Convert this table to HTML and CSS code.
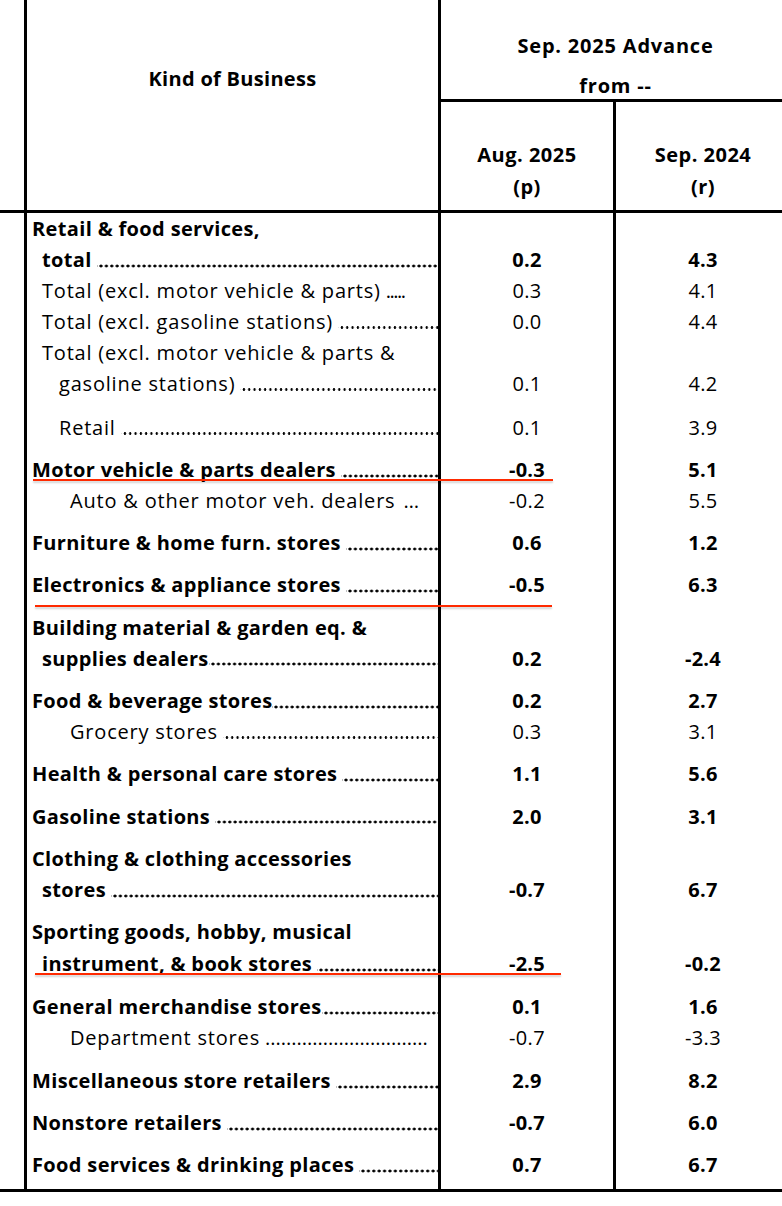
FILE: index.html
```html
<!DOCTYPE html>
<html lang="en">
<head>
<meta charset="utf-8">
<title>Advance Retail Sales</title>
<link rel="stylesheet" href="styles.css">
</head>
<body>
<div class="page">
  <div class="table">
    <div class="head">
      <div class="h-kind">Kind of Business</div>
      <div class="h-adv"><div>Sep. 2025 Advance</div><div>from --</div></div>
      <div class="h-aug"><div>Aug. 2025</div><div>(p)</div></div>
      <div class="h-sep"><div>Sep. 2024</div><div>(r)</div></div>
    </div>

    <div class="body">
      <div class="row b">
        <div class="c0"></div>
        <div class="lab">
          <div class="ln">Retail &amp; food services,</div>
          <div class="ln i1"><span class="t sp">total</span><span class="d"></span></div>
        </div>
        <div class="v1">0.2</div><div class="v2">4.3</div>
      </div>
      <div class="row">
        <div class="c0"></div>
        <div class="lab"><div class="ln i1"><span class="t sp">Total (excl. motor vehicle &amp; parts)</span><span class="fx tight">.....</span></div></div>
        <div class="v1">0.3</div><div class="v2">4.1</div>
      </div>
      <div class="row">
        <div class="c0"></div>
        <div class="lab"><div class="ln i1"><span class="t sp">Total (excl. gasoline stations)</span><span class="d"></span></div></div>
        <div class="v1">0.0</div><div class="v2">4.4</div>
      </div>
      <div class="row">
        <div class="c0"></div>
        <div class="lab">
          <div class="ln i1">Total (excl. motor vehicle &amp; parts &amp;</div>
          <div class="ln i2"><span class="t sp">gasoline stations)</span><span class="d"></span></div>
        </div>
        <div class="v1">0.1</div><div class="v2">4.2</div>
      </div>
      <div class="row gap gap2">
        <div class="c0"></div>
        <div class="lab"><div class="ln i2"><span class="t sp">Retail</span><span class="d"></span></div></div>
        <div class="v1">0.1</div><div class="v2">3.9</div>
      </div>

      <div class="row gap b">
        <div class="c0"></div>
        <div class="lab"><div class="ln"><span class="t sp">Motor vehicle &amp; parts dealers</span><span class="d"></span></div></div>
        <div class="v1">-0.3</div><div class="v2">5.1</div>
      </div>
      <div class="row">
        <div class="c0"></div>
        <div class="lab"><div class="ln i3"><span class="t sp">Auto &amp; other motor veh. dealers</span><span class="fx ell">&hellip;</span></div></div>
        <div class="v1">-0.2</div><div class="v2">5.5</div>
      </div>
      <div class="row gap b">
        <div class="c0"></div>
        <div class="lab"><div class="ln"><span class="t sp">Furniture &amp; home furn. stores</span><span class="d"></span></div></div>
        <div class="v1">0.6</div><div class="v2">1.2</div>
      </div>
      <div class="row gap b">
        <div class="c0"></div>
        <div class="lab"><div class="ln"><span class="t sp">Electronics &amp; appliance stores</span><span class="d"></span></div></div>
        <div class="v1">-0.5</div><div class="v2">6.3</div>
      </div>
      <div class="row gap b">
        <div class="c0"></div>
        <div class="lab">
          <div class="ln">Building material &amp; garden eq. &amp;</div>
          <div class="ln i1"><span class="t">supplies dealers</span><span class="d"></span></div>
        </div>
        <div class="v1">0.2</div><div class="v2">-2.4</div>
      </div>
      <div class="row gap b">
        <div class="c0"></div>
        <div class="lab"><div class="ln"><span class="t">Food &amp; beverage stores</span><span class="d"></span></div></div>
        <div class="v1">0.2</div><div class="v2">2.7</div>
      </div>
      <div class="row">
        <div class="c0"></div>
        <div class="lab"><div class="ln i3"><span class="t sp">Grocery stores</span><span class="d"></span></div></div>
        <div class="v1">0.3</div><div class="v2">3.1</div>
      </div>
      <div class="row gap b">
        <div class="c0"></div>
        <div class="lab"><div class="ln"><span class="t sp">Health &amp; personal care stores</span><span class="d"></span></div></div>
        <div class="v1">1.1</div><div class="v2">5.6</div>
      </div>
      <div class="row gap b">
        <div class="c0"></div>
        <div class="lab"><div class="ln"><span class="t sp">Gasoline stations</span><span class="d"></span></div></div>
        <div class="v1">2.0</div><div class="v2">3.1</div>
      </div>
      <div class="row gap b">
        <div class="c0"></div>
        <div class="lab">
          <div class="ln">Clothing &amp; clothing accessories</div>
          <div class="ln i1"><span class="t sp">stores</span><span class="d"></span></div>
        </div>
        <div class="v1">-0.7</div><div class="v2">6.7</div>
      </div>
      <div class="row gap b">
        <div class="c0"></div>
        <div class="lab">
          <div class="ln">Sporting goods, hobby, musical</div>
          <div class="ln i1 tall"><span class="t sp">instrument, &amp; book stores</span><span class="d"></span></div>
        </div>
        <div class="v1 tall">-2.5</div><div class="v2 tall">-0.2</div>
      </div>

      <div class="row gap b">
        <div class="c0"></div>
        <div class="lab"><div class="ln"><span class="t">General merchandise stores</span><span class="d"></span></div></div>
        <div class="v1">0.1</div><div class="v2">1.6</div>
      </div>
      <div class="row">
        <div class="c0"></div>
        <div class="lab"><div class="ln i3"><span class="t sp">Department stores</span><span class="fx">...............................</span></div></div>
        <div class="v1">-0.7</div><div class="v2">-3.3</div>
      </div>
      <div class="row gap b">
        <div class="c0"></div>
        <div class="lab"><div class="ln"><span class="t sp">Miscellaneous store retailers</span><span class="d"></span></div></div>
        <div class="v1">2.9</div><div class="v2">8.2</div>
      </div>
      <div class="row gap b">
        <div class="c0"></div>
        <div class="lab"><div class="ln"><span class="t sp">Nonstore retailers</span><span class="d"></span></div></div>
        <div class="v1">-0.7</div><div class="v2">6.0</div>
      </div>
      <div class="row gap b last">
        <div class="c0"></div>
        <div class="lab"><div class="ln"><span class="t sp">Food services &amp; drinking places</span><span class="d"></span></div></div>
        <div class="v1">0.7</div><div class="v2">6.7</div>
      </div>
    </div>
  </div>

  <div class="mark mark-1"></div>
  <div class="mark mark-2"></div>
  <div class="mark mark-3"></div>
</div>
</body>
</html>
```

FILE: styles.css
```css
html, body {
  margin: 0;
  padding: 0;
  background: #fff;
}

body {
  font-family: "Open Sans", Lato, sans-serif;
  font-size: 20px;
  color: #000;
}

.page {
  position: relative;
  width: 782px;
  height: 1206px;
  overflow: hidden;
}

.table {
  width: 790px;
}

/* ---------- header ---------- */
.head {
  display: grid;
  grid-template-columns: 24px 417px 175px 174px;
  grid-template-rows: 102px 108px;
  border-bottom: 3px solid #000;
  font-weight: 700;
  letter-spacing: 0.5px;
}

.head > div {
  box-sizing: border-box;
  text-align: center;
}

.h-kind {
  grid-column: 2;
  grid-row: 1 / 3;
  border-left: 3px solid #000;
  border-right: 3px solid #000;
  padding-top: 64px;
  line-height: 30px;
  letter-spacing: 0.3px;
}

.h-adv {
  grid-column: 3 / 5;
  grid-row: 1;
  border-bottom: 3px solid #000;
  padding-top: 26px;
  line-height: 40px;
  letter-spacing: 0.8px;
}

.h-aug {
  grid-column: 3;
  grid-row: 2;
  border-right: 3px solid #000;
  padding-top: 37px;
  line-height: 32px;
}

.h-sep {
  grid-column: 4;
  grid-row: 2;
  padding-top: 37px;
  line-height: 32px;
}

/* ---------- body ---------- */
.body {
  border-bottom: 3px solid #000;
}

.row {
  display: grid;
  grid-template-columns: 24px 417px 175px 174px;
  line-height: 31px;
  letter-spacing: 0.8px;
}

.row.b {
  font-weight: 700;
  letter-spacing: 0.35px;
}

.row > div {
  box-sizing: border-box;
}

.row.gap > div {
  padding-top: 11.3px;
}

.row.gap2 > div {
  padding-top: 12.5px;
}

.row.last > div {
  padding-bottom: 9px;
}

.lab {
  border-left: 3px solid #000;
  border-right: 3px solid #000;
  padding-left: 5px;
  min-width: 0;
}

.v1, .v2 {
  display: flex;
  align-items: flex-end;
  justify-content: center;
  letter-spacing: 0.3px;
}

.v1 {
  border-right: 3px solid #000;
}

.ln {
  display: flex;
  white-space: nowrap;
  overflow: hidden;
}

.ln.i1 { padding-left: 10px; }
.ln.i2 { padding-left: 27px; }
.ln.i3 { padding-left: 38px; }

.ln.tall { line-height: 33px; }
.v1.tall, .v2.tall { line-height: 33px; }

.t {
  flex: none;
}

.t.sp {
  padding-right: 5px;
}

/* dot leader filling the rest of the label cell */
.d {
  flex: 1 1 auto;
  min-width: 0;
  background-image: radial-gradient(circle at 50% 50%, #000 0, #000 1.05px, rgba(0, 0, 0, 0) 1.45px);
  background-size: 5.3px 3px;
  background-repeat: repeat-x;
  background-position: 1.3px calc(100% - 7.6px);
}

.row.b .d {
  background-image: radial-gradient(circle at 50% 50%, #000 0, #000 1.3px, rgba(0, 0, 0, 0) 1.7px);
  background-size: 5.4px 4px;
  background-position: 1.3px calc(100% - 7.2px);
}

.row.b .ln.tall .d {
  background-position: 1.3px calc(100% - 8.2px);
}

.fx {
  flex: none;
  letter-spacing: 0;
}

.fx.tight {
  letter-spacing: -1.5px;
}

.fx.ell {
  padding-left: 3px;
  letter-spacing: 0.5px;
}

/* ---------- red annotation underlines ---------- */
.mark {
  position: absolute;
  height: 2px;
  background: #ff2a00;
  box-shadow: 0 2px 2px rgba(0, 0, 0, 0.18);
}

.mark-1 { top: 479px; left: 33px; width: 520px; }
.mark-2 { top: 605px; left: 35px; width: 517px; }
.mark-3 { top: 973px; left: 35px; width: 526px; }
```
